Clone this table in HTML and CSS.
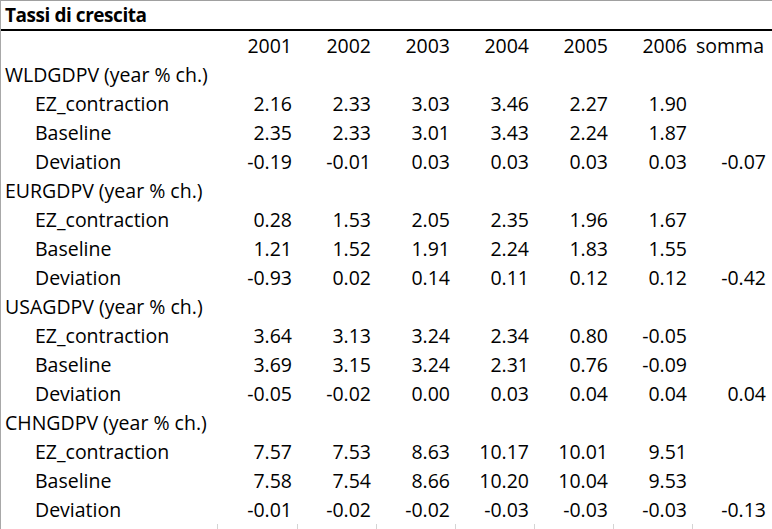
FILE: index.html
```html
<!DOCTYPE html>
<html lang="it">
<head>
<meta charset="utf-8">
<title>Tassi di crescita</title>
<link rel="stylesheet" href="styles.css">
</head>
<body>
<div class="sheet">
  <span class="sel-mark"></span>
  <div class="title-row"><span class="title">Tassi di crescita</span></div>
  <table class="grid">
    <colgroup>
      <col class="c-label"><col class="c-first"><col class="c-num"><col class="c-num"><col class="c-num"><col class="c-num"><col class="c-num"><col class="c-num">
    </colgroup>
    <tbody>
      <tr><td></td><td class="n">2001</td><td class="n">2002</td><td class="n">2003</td><td class="n">2004</td><td class="n">2005</td><td class="n">2006</td><td class="l">somma</td></tr>

      <tr><td class="grp">WLDGDPV (year % ch.)</td><td></td><td></td><td></td><td></td><td></td><td></td><td></td></tr>
      <tr><td class="sub">EZ_contraction</td><td class="n">2.16</td><td class="n">2.33</td><td class="n">3.03</td><td class="n">3.46</td><td class="n">2.27</td><td class="n">1.90</td><td></td></tr>
      <tr><td class="sub">Baseline</td><td class="n">2.35</td><td class="n">2.33</td><td class="n">3.01</td><td class="n">3.43</td><td class="n">2.24</td><td class="n">1.87</td><td></td></tr>
      <tr><td class="sub">Deviation</td><td class="n">-0.19</td><td class="n">-0.01</td><td class="n">0.03</td><td class="n">0.03</td><td class="n">0.03</td><td class="n">0.03</td><td class="n">-0.07</td></tr>

      <tr><td class="grp">EURGDPV (year % ch.)</td><td></td><td></td><td></td><td></td><td></td><td></td><td></td></tr>
      <tr><td class="sub">EZ_contraction</td><td class="n">0.28</td><td class="n">1.53</td><td class="n">2.05</td><td class="n">2.35</td><td class="n">1.96</td><td class="n">1.67</td><td></td></tr>
      <tr><td class="sub">Baseline</td><td class="n">1.21</td><td class="n">1.52</td><td class="n">1.91</td><td class="n">2.24</td><td class="n">1.83</td><td class="n">1.55</td><td></td></tr>
      <tr><td class="sub">Deviation</td><td class="n">-0.93</td><td class="n">0.02</td><td class="n">0.14</td><td class="n">0.11</td><td class="n">0.12</td><td class="n">0.12</td><td class="n">-0.42</td></tr>

      <tr><td class="grp">USAGDPV (year % ch.)</td><td></td><td></td><td></td><td></td><td></td><td></td><td></td></tr>
      <tr><td class="sub">EZ_contraction</td><td class="n">3.64</td><td class="n">3.13</td><td class="n">3.24</td><td class="n">2.34</td><td class="n">0.80</td><td class="n">-0.05</td><td></td></tr>
      <tr><td class="sub">Baseline</td><td class="n">3.69</td><td class="n">3.15</td><td class="n">3.24</td><td class="n">2.31</td><td class="n">0.76</td><td class="n">-0.09</td><td></td></tr>
      <tr><td class="sub">Deviation</td><td class="n">-0.05</td><td class="n">-0.02</td><td class="n">0.00</td><td class="n">0.03</td><td class="n">0.04</td><td class="n">0.04</td><td class="n">0.04</td></tr>

      <tr><td class="grp">CHNGDPV (year % ch.)</td><td></td><td></td><td></td><td></td><td></td><td></td><td></td></tr>
      <tr><td class="sub">EZ_contraction</td><td class="n">7.57</td><td class="n">7.53</td><td class="n">8.63</td><td class="n">10.17</td><td class="n">10.01</td><td class="n">9.51</td><td></td></tr>
      <tr><td class="sub">Baseline</td><td class="n">7.58</td><td class="n">7.54</td><td class="n">8.66</td><td class="n">10.20</td><td class="n">10.04</td><td class="n">9.53</td><td></td></tr>
      <tr><td class="sub">Deviation</td><td class="n">-0.01</td><td class="n">-0.02</td><td class="n">-0.02</td><td class="n">-0.03</td><td class="n">-0.03</td><td class="n">-0.03</td><td class="n">-0.13</td></tr>

      <tr class="empty"><td></td><td></td><td></td><td></td><td></td><td></td><td></td><td></td></tr>
    </tbody>
  </table>
</div>
</body>
</html>
```

FILE: styles.css
```css
html, body {
  margin: 0;
  padding: 0;
  background: #ffffff;
}

.sheet {
  position: relative;
  width: 771px;
  height: 528px;
  border-top: 1px solid #a0a0a0;
  border-left: 1px solid #a8a8a8;
  border-right: 1px solid #e2e2e2;
  box-sizing: content-box;
  overflow: hidden;
  font-family: "Open Sans", "Liberation Sans", sans-serif;
  font-size: 19.5px;
  color: #000000;
}

.sel-mark {
  position: absolute;
  left: -1px;
  top: 133px;
  width: 1px;
  height: 42px;
  background: #6a9a78;
}

.title-row {
  height: 28px;
  border-bottom: 2px solid #000000;
  box-sizing: content-box;
  display: flex;
  align-items: flex-end;
  padding-left: 4px;
}

.title {
  font-size: 19px;
  font-weight: 700;
  line-height: 27px;
  letter-spacing: -0.45px;
}

.grid {
  border-collapse: collapse;
  table-layout: fixed;
  width: 770px;
}

.c-label { width: 216px; }
.c-first { width: 80px; }
.c-num { width: 79px; }

.grid td {
  height: 29px;
  padding: 1px 5px 0 4px;
  line-height: 28px;
  white-space: nowrap;
  overflow: visible;
  vertical-align: bottom;
  box-sizing: border-box;
}

.grid td.n { text-align: right; }
.grid td.l { text-align: left; padding-left: 4px; }

.grid td.grp { padding-left: 4px; }
.grid td.sub { padding-left: 34px; }

.grid tr.empty td {
  height: 6px;
  padding: 0;
  border-left: 1px solid #d4d4d4;
}
.grid tr.empty td:first-child { border-left: none; }
```
